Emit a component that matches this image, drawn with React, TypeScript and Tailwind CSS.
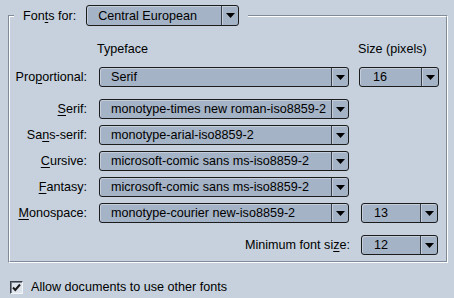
import type { ReactNode } from "react";

function Arrow() {
  return (
    <svg width="9" height="5" viewBox="0 0 9 5" className="block">
      <path d="M0 0h9L4.5 5z" fill="#000" />
    </svg>
  );
}

function Combo({
  value,
  className = "",
  pad = "pl-[11px]",
}: {
  value: string;
  className?: string;
  pad?: string;
}) {
  return (
    <div
      className={`flex h-[20px] items-stretch rounded-[3px] border border-[#1c1c1c] bg-[#a5b3c6] shadow-[inset_1px_1px_0_#c3cddb] ${className}`}
    >
      <div className={`flex flex-1 items-center overflow-hidden whitespace-nowrap ${pad}`}>
        {value}
      </div>
      <div className="flex w-[17px] items-center justify-center border-l border-[#3a3f47] shadow-[inset_1px_0_0_#c3cddb]">
        <Arrow />
      </div>
    </div>
  );
}

function U({ children }: { children: ReactNode }) {
  return <span className="underline underline-offset-2">{children}</span>;
}

function Row({
  label,
  value,
  className = "",
  size,
}: {
  label: ReactNode;
  value: string;
  className?: string;
  size?: ReactNode;
}) {
  return (
    <div className={`flex h-[20px] items-center ${className}`}>
      <div className="w-[77px] whitespace-nowrap text-right">{label}</div>
      <Combo value={value} className="ml-[12px] w-[250px]" />
      {size}
    </div>
  );
}

export default function App() {
  return (
    <div
      className="h-[298px] w-[454px] overflow-hidden bg-[#c6d1dd] text-[12.6px] leading-[14px] text-black"
      style={{ fontFamily: '"Liberation Sans", Arial, sans-serif' }}
    >
      <div className="pt-[15px] pl-[8px]">
        <div className="relative h-[248px] w-[440px] border border-t-[#808b99] border-l-[#808b99] border-b-white border-r-white">
          <div className="h-full border border-t-white border-l-white border-b-[#808b99] border-r-[#808b99] pt-[25px]">
            <div className="flex h-[14px] items-center">
              <span className="ml-[87px]">Typeface</span>
              <span className="ml-[210px]">Size (pixels)</span>
            </div>
            <Row
              className="mt-[11px]"
              label={
                <>
                  Pro<U>p</U>ortional:
                </>
              }
              value="Serif"
              size={<Combo value="16" className="ml-[10px] w-[80px]" pad="pl-[13px]" />}
            />
            <Row
              className="mt-[12px]"
              label={
                <>
                  <U>S</U>erif:
                </>
              }
              value="monotype-times new roman-iso8859-2"
            />
            <Row
              className="mt-[6px]"
              label={
                <>
                  Sa<U>n</U>s-serif:
                </>
              }
              value="monotype-arial-iso8859-2"
            />
            <Row
              className="mt-[6px]"
              label={
                <>
                  <U>C</U>ursive:
                </>
              }
              value="microsoft-comic sans ms-iso8859-2"
            />
            <Row
              className="mt-[6px]"
              label={
                <>
                  <U>F</U>antasy:
                </>
              }
              value="microsoft-comic sans ms-iso8859-2"
            />
            <Row
              className="mt-[6px]"
              label={
                <>
                  <U>M</U>onospace:
                </>
              }
              value="monotype-courier new-iso8859-2"
              size={<Combo value="13" className="ml-[12px] w-[77px]" pad="pl-[12px]" />}
            />
            <div className="mt-[12px] flex h-[20px] items-center">
              <div className="w-[340px] text-right">
                Minimum font si<U>z</U>e:
              </div>
              <Combo value="12" className="ml-[11px] w-[77px]" pad="pl-[12px]" />
            </div>
          </div>
          <div className="absolute left-[5px] top-[-11px] flex items-center gap-[10px] bg-[#c6d1dd] pl-[9px] pr-[9px]">
            <span>
              Fon<U>t</U>s for:
            </span>
            <Combo value="Central European" className="w-[153px] h-[21px]" pad="pl-[11px]" />
          </div>
        </div>
      </div>
      <div className="mt-[17px] flex items-center pl-[10px]">
        <div className="flex h-[13px] w-[13px] items-center justify-center border border-t-[#3b3f45] border-l-[#3b3f45] border-b-[#f2f5f8] border-r-[#f2f5f8] bg-[#dfe5ec] shadow-[inset_1px_1px_0_#7c8591]">
          <svg width="9" height="9" viewBox="0 0 9 9">
            <path d="M1 4.5l2.3 2.5L8 1.5" fill="none" stroke="#1a1a1a" strokeWidth="2" />
          </svg>
        </div>
        <span className="ml-[8px]">Allow documents to use other fonts</span>
      </div>
    </div>
  );
}
